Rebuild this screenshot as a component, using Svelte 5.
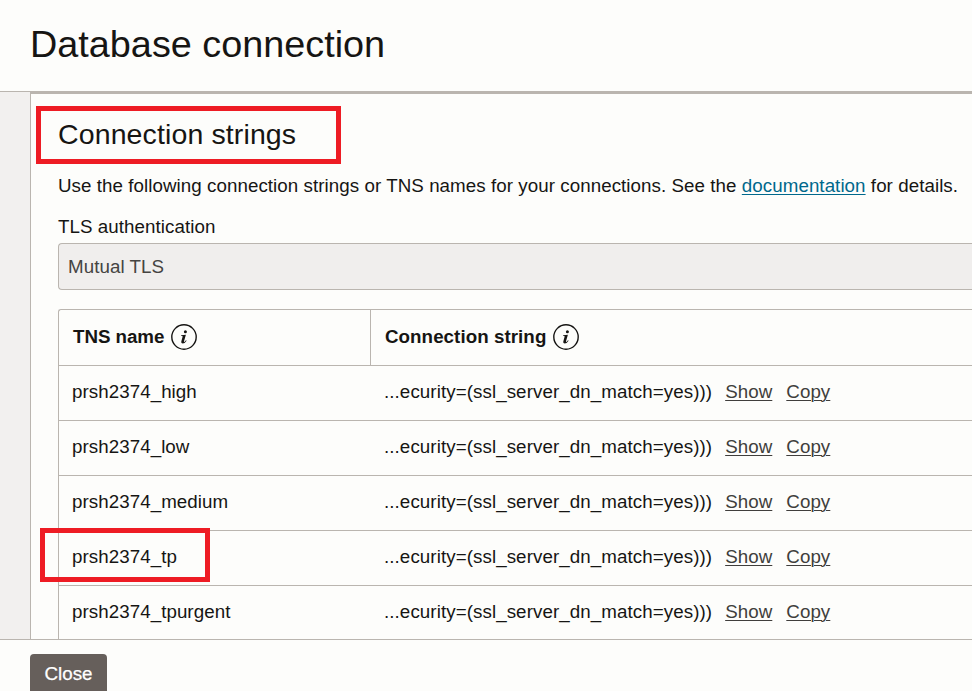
<script>
  const rows = ['high', 'low', 'medium', 'tp', 'tpurgent'].map((s) => 'prsh2374_' + s);
</script>

{#snippet info()}
  <svg class="info" width="26" height="26" viewBox="0 0 26 26" aria-hidden="true">
    <circle cx="13" cy="13" r="12.2" fill="none" stroke="#161513" stroke-width="1.4" />
    <circle cx="14.4" cy="7.7" r="1.5" fill="#161513" />
    <path d="M10.2 11.3 L14.9 10.8 L13 17.2 Q12.8 18.1 13.4 17.9 Q14.1 17.6 15 16.3 L15.6 16.8 Q13.9 19.5 11.8 19.5 Q9.8 19.4 10.3 17.5 L11.6 12.7 Q11.8 12 11.1 12 L10.1 12 Z" fill="#161513" />
  </svg>
{/snippet}

<div class="dialog">
  <header><h1>Database connection</h1></header>
  <div class="body">
    <main>
      <h2><span>Connection strings</span><i class="mark title-mark"></i></h2>
      <p class="intro">Use the following connection strings or TNS names for your connections. See the <a href="#docs">documentation</a> for details.</p>
      <div class="label">TLS authentication</div>
      <div class="field">Mutual TLS</div>
      <div class="table">
        <div class="row head">
          <div class="name"><span>TNS name</span>{@render info()}</div>
          <div class="conn"><span>Connection string</span>{@render info()}</div>
        </div>
        {#each rows as row}
          <div class="row">
            <div class="name">{row}{#if row === 'prsh2374_tp'}<i class="mark row-mark"></i>{/if}</div>
            <div class="conn"><span class="str">...ecurity=(ssl_server_dn_match=yes)))</span><a href="#show">Show</a><a href="#copy">Copy</a></div>
          </div>
        {/each}
      </div>
    </main>
  </div>
  <footer><button>Close</button></footer>
</div>

<style>
  :global(body) { background: #fdfdfb; overflow: hidden; }
  .dialog {
    width: 972px; height: 691px; overflow: hidden; display: flex; flex-direction: column;
    background: #fdfdfb; color: #161513; box-sizing: border-box;
    font: 18.75px/24px "Liberation Sans", Arial, sans-serif; letter-spacing: 0.058px; white-space: nowrap;
  }
  .dialog * { box-sizing: border-box; }
  header { height: 91px; flex: none; padding: 20px 0 0 30px; }
  h1 { margin: 0; font-size: 37.8px; line-height: 48px; font-weight: 400; letter-spacing: 0; }
  .body { height: 548px; flex: none; overflow: hidden; padding-left: 30px; background: #f2f0ef; border-top: 1px solid #bab5af; }
  main { height: 570px; background: #fdfdfb; border-left: 1px solid #bab5af; padding-left: 27px; box-shadow: inset 0 2px #bab5af; }
  h2 { position: relative; margin: 0; padding-top: 24px; height: 82px; font-size: 28.5px; line-height: 36px; font-weight: 400; letter-spacing: 0.12px; }
  .mark { position: absolute; border: 5px solid #ee1c24; z-index: 1; }
  .title-mark { left: -22px; top: 14px; width: 305px; height: 58px; }
  .intro { margin: 0; height: 41px; }
  .intro a { color: #00688c; text-underline-offset: 2px; text-decoration-thickness: 1px; }
  .label { height: 28px; }
  .field { height: 47px; padding: 11px 9px; border: 1px solid #bab5af; border-right: 0; border-radius: 4px 0 0 4px; background: #f0eeed; color: #454442; }
  .table { margin-top: 19px; border: 1px solid #bab5af; border-right: 0; border-radius: 3px 0 0 0; }
  .row { display: flex; height: 55px; border-bottom: 1px solid #bab5af; }
  .row > div { display: flex; align-items: flex-start; padding-top: 14px; }
  .name { position: relative; width: 312px; flex: none; padding-left: 13px; }
  .conn { flex: 1; padding-left: 13px; }
  .str { letter-spacing: 0.08px; }
  .conn a { margin-left: 13px; color: #403e3c; text-underline-offset: 2px; text-decoration-thickness: 1px; }
  .conn a + a { margin-left: 14px; }
  .head { height: 56px; font-weight: 700; }
  .row.head > div { padding: 15px 0 0 14px; }
  .head .name { border-right: 1px solid #bab5af; letter-spacing: -0.05px; }
  .info { margin: -0.6px 0 0 7px; flex: none; }
  .row-mark { left: -19px; top: -3px; width: 170px; height: 54px; }
  footer { flex: 1; border-top: 1px solid #bab5af; padding: 14px 30px 0; background: #fdfdfb; }
  button { display: block; width: 77px; height: 40px; padding: 0; border: 0; border-radius: 4px; background: #665f5b; color: #fff; font: inherit; -webkit-text-stroke: 0.25px #fff; }
</style>
